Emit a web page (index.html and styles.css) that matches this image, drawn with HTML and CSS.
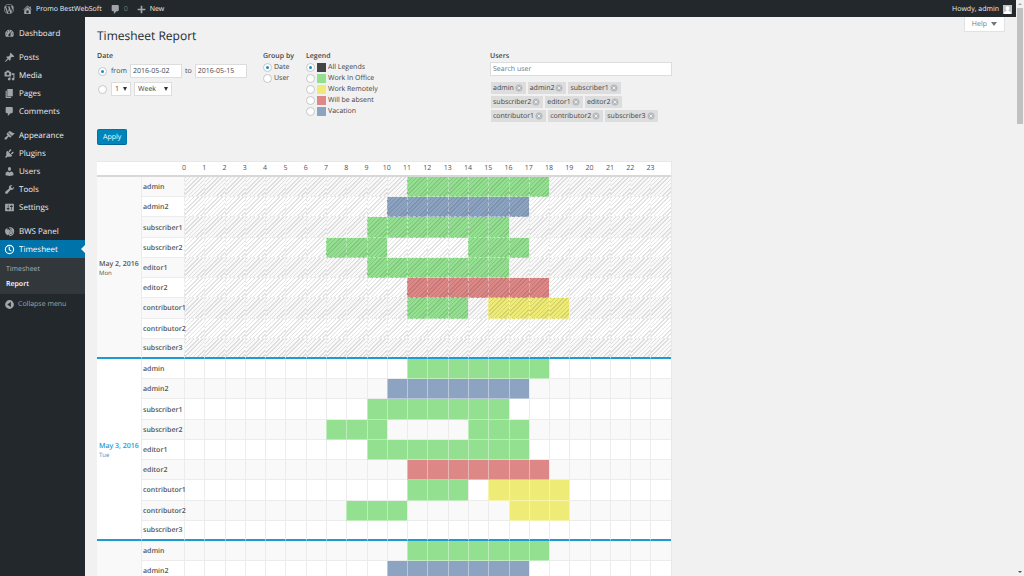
FILE: index.html
```html
<!DOCTYPE html>
<html lang="en">
<head>
<meta charset="utf-8">
<title>Timesheet Report</title>
<link rel="stylesheet" href="styles.css">
</head>
<body>
<div class="window">
<div class="screen">
  <header class="topbar">
    <a href="#" class="topbar-link" aria-label="WordPress"><svg class="icon icon-logo" viewBox="0 0 20 20"><path d="M20 10c0-5.51-4.49-10-10-10C4.48 0 0 4.49 0 10c0 5.52 4.48 10 10 10 5.51 0 10-4.48 10-10zM7.78 15.37L4.37 6.22c.55-.02 1.17-.08 1.17-.08.5-.06.44-1.13-.06-1.11 0 0-1.45.11-2.37.11-.18 0-.37 0-.58-.01C4.12 2.69 6.87 1.11 10 1.11c2.33 0 4.45.87 6.05 2.34-.68-.11-1.65.39-1.65 1.58 0 .74.45 1.36.9 2.1.35.61.55 1.36.55 2.46 0 1.49-1.4 5-1.4 5l-3.03-8.37c.54-.02.82-.17.82-.17.5-.05.44-1.25-.06-1.22 0 0-1.44.12-2.38.12-.87 0-2.33-.12-2.33-.12-.5-.03-.56 1.2-.06 1.22l.92.08 1.26 3.41zM17.41 10c.24-.64.74-1.87.43-4.25.7 1.29 1.05 2.71 1.05 4.25 0 3.29-1.73 6.24-4.4 7.78.97-2.59 1.94-5.2 2.92-7.78zM6.1 18.09C3.12 16.65 1.11 13.53 1.11 10c0-1.3.23-2.48.72-3.59C3.25 10.3 4.67 14.2 6.1 18.09zm4.03-6.63l2.58 6.98c-.86.29-1.76.45-2.71.45-.79 0-1.57-.11-2.29-.33.81-2.38 1.62-4.74 2.42-7.1z"/></svg></a>
    <a href="#" class="topbar-link"><svg class="icon" viewBox="0 0 20 20"><path d="M16 8.5l1.53 1.53-1.06 1.06L10 4.6l-6.47 6.49-1.06-1.06L10 2.5l4 4v-2h2v4zm-6-2.46l6 5.99V18H4v-5.97zM12 17v-5H8v5h4z"/></svg>Promo BestWebSoft</a>
    <a href="#" class="topbar-link topbar-muted"><svg class="icon" viewBox="0 0 20 20"><path d="M5 2h9c1.1 0 2 .9 2 2v7c0 1.1-.9 2-2 2h-2l-5 5v-5H5c-1.1 0-2-.9-2-2V4c0-1.1.9-2 2-2z"/></svg>0</a>
    <a href="#" class="topbar-link"><svg class="icon" viewBox="0 0 20 20"><path d="M8.500 3h3v5.500H17v3h-5.500V17h-3v-5.500H3v-3h5.500z"/></svg>New</a>
    <a href="#" class="topbar-link topbar-user">Howdy, admin<svg class="avatar" viewBox="0 0 18 18"><rect width="18" height="18" fill="#c4c4c4"/><path fill="#fff" d="M9 2.500c2.600 0 3.800 1.800 3.600 4.200-.1 1.600-.8 2.800-1.600 3.600v1.500l4.500 2.200V18h-13v-4l4.500-2.200v-1.500c-.8-.8-1.500-2-1.600-3.600C5.200 4.300 6.400 2.500 9 2.500z"/></svg></a>
  </header>

  <div class="body">
    <nav class="sidebar">
      <ul class="menu">
        <li><a href="#" class="menu-link"><svg class="icon" viewBox="0 0 20 20"><path fill-rule="evenodd" d="M3.76 16h12.480c1.100-1.370 1.760-3.110 1.760-5 0-4.420-3.580-8-8-8s-8 3.580-8 8c0 1.890.66 3.630 1.760 5zM10 4c.55 0 1 .45 1 1s-.45 1-1 1-1-.45-1-1 .45-1 1-1zM6 6c.55 0 1 .45 1 1s-.45 1-1 1-1-.45-1-1 .45-1 1-1zm8 0c.55 0 1 .45 1 1s-.45 1-1 1-1-.45-1-1 .45-1 1-1zm-5.370 5.550L12 7v6c0 1.100-.9 2-2 2s-2-.9-2-2c0-.57.24-1.080.63-1.450zM4 10c.55 0 1 .45 1 1s-.45 1-1 1-1-.45-1-1 .45-1 1-1zm12 0c.55 0 1 .45 1 1s-.45 1-1 1-1-.45-1-1 .45-1 1-1z"/></svg>Dashboard</a></li>
      </ul>
      <ul class="menu">
        <li><a href="#" class="menu-link"><svg class="icon" viewBox="0 0 20 20"><path d="M10.44 3.020l1.820-1.820 6.360 6.350-1.830 1.820c-1.050-.68-2.480-.57-3.410.36l-.75.75c-.92.93-1.040 2.350-.35 3.410l-1.830 1.820-2.410-2.410-2.800 2.790c-.42.42-3.380 2.710-3.800 2.290s1.860-3.390 2.280-3.810l2.790-2.790L4.100 9.360l1.830-1.820c1.050.69 2.480.57 3.400-.36l.75-.75c.93-.92 1.050-2.350.36-3.410z"/></svg>Posts</a></li>
        <li><a href="#" class="menu-link"><svg class="icon" viewBox="0 0 20 20"><path fill-rule="evenodd" d="M13 11V4c0-.55-.45-1-1-1h-1.670L9 1H5L3.670 3H2c-.55 0-1 .45-1 1v7c0 .55.45 1 1 1h10c.55 0 1-.45 1-1zM7 4.500c1.380 0 2.500 1.120 2.500 2.500S8.380 9.500 7 9.500 4.500 8.380 4.500 7 5.620 4.500 7 4.500zM14 6h5v10.500c0 1.380-1.120 2.500-2.500 2.500S14 17.880 14 16.500s1.120-2.500 2.500-2.500c.17 0 .34.02.5.05V9h-3V6zm-4 8.050V13h2v3.500c0 1.380-1.120 2.500-2.500 2.500S7 17.880 7 16.500 8.120 14 9.500 14c.17 0 .34.02.5.05z"/></svg>Media</a></li>
        <li><a href="#" class="menu-link"><svg class="icon" viewBox="0 0 20 20"><path d="M6 15V2h10v13H6zm-1 1h8v2H3V5h2v11z"/></svg>Pages</a></li>
        <li><a href="#" class="menu-link"><svg class="icon" viewBox="0 0 20 20"><path d="M5 2h9c1.100 0 2 .9 2 2v7c0 1.100-.9 2-2 2h-2l-5 5v-5H5c-1.100 0-2-.9-2-2V4c0-1.100.9-2 2-2z"/></svg>Comments</a></li>
      </ul>
      <ul class="menu">
        <li><a href="#" class="menu-link"><svg class="icon" viewBox="0 0 20 20"><path d="M14.480 11.060L7.410 3.990l1.500-1.500c.5-.56 2.300-.47 3.510.32 1.210.8 1.430 1.280 2.910 2.100 1.180.64 2.450 1.260 4.450.85zm-.71.71L6.700 4.700 4.930 6.470c-.39.39-.39 1.020 0 1.410l1.060 1.060c.39.39.39 1.030 0 1.420-.6.6-1.430 1.110-2.210 1.690-.35.26-.7.53-1.010.84C1.430 14.230.4 16.080 1.400 17.070c.99 1 2.840-.03 4.180-1.360.31-.31.58-.66.85-1.020.57-.78 1.080-1.610 1.690-2.210.39-.39 1.020-.39 1.410 0l1.060 1.060c.39.39 1.020.39 1.410 0z"/></svg>Appearance</a></li>
        <li><a href="#" class="menu-link"><svg class="icon" viewBox="0 0 20 20"><path d="M13.110 4.360L9.870 7.600 8 5.730l3.240-3.240c.35-.34 1.050-.2 1.560.32.52.51.66 1.210.31 1.550zm-8 1.770l.91-1.120 9.010 9.010-1.190.84c-.71.71-2.630 1.160-3.820 1.160H6.140L4.900 17.260c-.59.59-1.540.59-2.120 0-.59-.58-.59-1.530 0-2.120l1.240-1.240v-3.880c0-1.130.4-3.190 1.090-3.890zm7.260 3.970l3.240-3.240c.34-.35 1.040-.21 1.550.31.52.51.66 1.210.31 1.550l-3.240 3.250z"/></svg>Plugins</a></li>
        <li><a href="#" class="menu-link"><svg class="icon" viewBox="0 0 20 20"><path d="M10 9.250c-2.270 0-2.730-3.440-2.730-3.440C7 4.020 7.820 2 9.970 2c2.160 0 2.980 2.020 2.710 3.810 0 0-.41 3.440-2.680 3.440zm0 2.570L12.720 10c2.390 0 4.520 2.330 4.520 4.530v2.490s-3.650 1.130-7.240 1.130c-3.650 0-7.240-1.130-7.240-1.130v-2.490c0-2.250 1.940-4.480 4.470-4.480z"/></svg>Users</a></li>
        <li><a href="#" class="menu-link"><svg class="icon" viewBox="0 0 20 20"><path d="M16.680 9.770c-1.340 1.340-3.300 1.670-4.950.99l-5.410 6.520c-.99.99-2.590.99-3.580 0s-.99-2.590 0-3.570l6.520-5.420c-.68-1.650-.35-3.610.99-4.950 1.280-1.280 3.120-1.620 4.720-1.060l-2.890 2.890 2.820 2.820 2.860-2.870c.53 1.580.18 3.390-1.080 4.650z"/></svg>Tools</a></li>
        <li><a href="#" class="menu-link"><svg class="icon" viewBox="0 0 20 20"><path fill-rule="evenodd" d="M18 16V4c0-.55-.45-1-1-1H3c-.55 0-1 .45-1 1v12c0 .55.45 1 1 1h14c.55 0 1-.45 1-1zM8 11h1c.55 0 1 .45 1 1s-.45 1-1 1H8v1.500c0 .28-.22.5-.5.5s-.5-.22-.5-.5V13H6c-.55 0-1-.45-1-1s.45-1 1-1h1V5.500c0-.28.22-.5.5-.5s.5.22.5.5V11zm5-2h-1c-.55 0-1-.45-1-1s.45-1 1-1h1V5.500c0-.28.22-.5.5-.5s.5.22.5.5V7h1c.55 0 1 .45 1 1s-.45 1-1 1h-1v5.500c0 .28-.22.5-.5.5s-.5-.22-.5-.5V9z"/></svg>Settings</a></li>
      </ul>
      <ul class="menu">
        <li><a href="#" class="menu-link"><svg class="icon" viewBox="0 0 20 20"><path d="M2 7c1-2 3-3 5-3l-2 3 3-1 3 2-1 6-3 3c-3-1-5-4-5-7z"/><path fill="none" stroke="currentColor" stroke-width="2" d="M9 3.500c5-1.500 9 2 8.500 7-.4 4-3.500 7-7.500 7M12 5c1 4 1 8-3 11M15 5c.5 4 0 8-3 10"/></svg>BWS Panel</a></li>
        <li>
          <a href="#" class="menu-link menu-link-current"><svg class="icon" viewBox="0 0 20 20"><circle cx="10" cy="10" r="7.500" fill="none" stroke="currentColor" stroke-width="2"/><path fill="none" stroke="currentColor" stroke-width="2" d="M9.500 5v5.500l4 2.500"/></svg>Timesheet</a>
          <ul class="submenu">
            <li><a href="#" class="submenu-link">Timesheet</a></li>
            <li><a href="#" class="submenu-link submenu-link-current">Report</a></li>
          </ul>
        </li>
      </ul>
      <button type="button" class="collapse"><svg class="icon" viewBox="0 0 20 20"><path fill-rule="evenodd" d="M10 2a8 8 0 1 0 0 16 8 8 0 0 0 0-16zM12.500 5.500v9L6 10z"/></svg>Collapse menu</button>
    </nav>

    <main class="content">
      <div class="page-head">
        <h1 class="page-title">Timesheet Report</h1>
        <button type="button" class="help">Help<span class="caret"></span></button>
      </div>

      <form class="report">
        <div class="filters">
          <fieldset class="filter filter-date">
            <legend class="filter-title">Date</legend>
            <div class="date-row">
              <input type="radio" class="radio" name="range" id="range-dates" checked>
              <label for="range-dates">from</label>
              <input type="text" class="text-input date-input" aria-label="From date" value="2016-05-02">
              <label for="date-to">to</label>
              <input type="text" class="text-input date-input" id="date-to" value="2016-05-15">
            </div>
            <div class="date-row">
              <input type="radio" class="radio" name="range" aria-label="Period">
              <span class="select select-count"><select aria-label="Count"><option>1</option><option>2</option></select></span>
              <span class="select select-unit"><select aria-label="Unit"><option>Week</option><option>Month</option></select></span>
            </div>
          </fieldset>
          <fieldset class="filter filter-group">
            <legend class="filter-title">Group by</legend>
            <label class="option"><input type="radio" class="radio" name="group" checked>Date</label>
            <label class="option"><input type="radio" class="radio" name="group">User</label>
          </fieldset>
          <fieldset class="filter filter-legend">
            <legend class="filter-title">Legend</legend>
            <label class="option"><input type="radio" class="radio" name="legend" checked><span class="swatch swatch-all"></span>All Legends</label>
            <label class="option"><input type="radio" class="radio" name="legend"><span class="swatch swatch-office"></span>Work In Office</label>
            <label class="option"><input type="radio" class="radio" name="legend"><span class="swatch swatch-remote"></span>Work Remotely</label>
            <label class="option"><input type="radio" class="radio" name="legend"><span class="swatch swatch-absent"></span>Will be absent</label>
            <label class="option"><input type="radio" class="radio" name="legend"><span class="swatch swatch-vacation"></span>Vacation</label>
          </fieldset>
          <div class="filter filter-users">
            <label class="filter-title" for="user-search">Users</label>
            <input type="text" class="text-input" id="user-search" placeholder="Search user">
            <ul class="chips" id="chips"></ul>
          </div>
        </div>
        <button type="button" class="apply">Apply</button>

        <table class="sheet" id="sheet">
          <colgroup>
            <col class="col-date"><col class="col-user"><col span="24">
          </colgroup>
        </table>
      </form>
    </main>
  </div>
</div>
<div class="scrollbar" aria-hidden="true">
  <span class="scroll-arrow scroll-up"></span>
  <span class="scroll-thumb"></span>
  <span class="scroll-arrow scroll-down"></span>
</div>
</div>
<script src="script.js"></script>
</body>
</html>
```
FILE: styles.css
```css
* {
  box-sizing: border-box;
}

body {
  margin: 0;
  background: #f1f1f1;
  color: #444;
  font-family: "Open Sans", "Noto Sans", sans-serif;
  font-size: 7px;
  line-height: 11px;
  text-rendering: geometricPrecision;
}

ul {
  margin: 0;
  padding: 0;
  list-style: none;
}

a {
  color: inherit;
  text-decoration: none;
}

button,
input,
select {
  margin: 0;
  font: inherit;
  color: inherit;
  text-rendering: inherit;
}

.window {
  display: flex;
  height: 100vh;
  overflow: hidden;
}

.screen {
  display: flex;
  flex: 1;
  flex-direction: column;
  min-width: 0;
}

.body {
  display: flex;
  flex: 1;
  min-height: 0;
}

.icon {
  flex: none;
  width: 11px;
  height: 11px;
  fill: currentColor;
  color: #a0a5aa;
}

/* Top bar */

.topbar {
  display: flex;
  flex: none;
  align-items: center;
  gap: 8px;
  height: 17px;
  padding: 1px 4px 0;
  background: #23282d;
  color: #eee;
}

.topbar-link {
  display: flex;
  align-items: center;
  gap: 3px;
}

.icon-logo {
  width: 10px;
  height: 10px;
}

.topbar-muted {
  color: #72777c;
}

.topbar-user {
  gap: 4px;
  margin-left: auto;
}

.avatar {
  width: 9px;
  height: 9px;
}

/* Sidebar */

.sidebar {
  flex: none;
  width: 85px;
  padding-top: 7px;
  background: #23282d;
  color: #eee;
  font-size: 8px;
}

.menu + .menu {
  margin-top: 6px;
}

.menu-link {
  display: flex;
  align-items: center;
  gap: 4px;
  height: 18px;
  padding-left: 4px;
}

.menu-link-current {
  position: relative;
  background: #0073aa;
  color: #fff;
}

.menu-link-current .icon {
  color: #fff;
}

.menu-link-current::after {
  content: "";
  position: absolute;
  top: 5px;
  right: 0;
  border: 4px solid transparent;
  border-left: 0;
  border-right-color: #f1f1f1;
}

.submenu {
  padding: 4px 0 2px;
  background: #32373c;
  font-size: 7px;
  line-height: 15px;
}

.submenu-link {
  display: block;
  padding-left: 6px;
  color: #a9adb1;
}

.submenu-link-current {
  color: #fff;
  font-weight: 600;
}

.collapse {
  display: flex;
  align-items: center;
  gap: 3px;
  height: 20px;
  padding: 0 0 0 4px;
  border: 0;
  background: none;
  color: #a0a5aa;
  font-size: 7px;
}

/* Page */

.content {
  flex: 1;
  min-width: 0;
  padding: 0 11px 0 12px;
  overflow: hidden;
}

.page-head {
  display: flex;
  align-items: flex-start;
  justify-content: space-between;
}

.page-title {
  margin: 0;
  padding: 10px 0 6px;
  color: #23282d;
  font-size: 12px;
  font-weight: 400;
  line-height: 18px;
}

.help {
  display: flex;
  align-items: center;
  gap: 4px;
  height: 15px;
  padding: 0 7px;
  border: 1px solid #e2e2e2;
  border-top: 0;
  background: #fff;
  color: #72777c;
}

.caret {
  border: 3px solid transparent;
  border-top: 4px solid #72777c;
  border-bottom: 0;
}

.report {
  max-width: 575px;
}

.filters {
  display: flex;
  align-items: flex-start;
}

.filter {
  min-width: 0;
  margin: 0;
  padding: 0;
  border: 0;
}

.filter-title {
  display: block;
  padding: 1px 0 0;
  font-weight: 600;
  line-height: 10px;
}

.filter-date {
  width: 166px;
}

.filter-group {
  width: 43px;
}

.filter-legend {
  width: 184px;
}

.filter-users {
  flex: 1;
}

.radio {
  display: grid;
  flex: none;
  place-items: center;
  width: 9px;
  height: 9px;
  border: 1px solid #c4c7ca;
  border-radius: 50%;
  background: #fff;
  appearance: none;
}

.radio:checked::before {
  content: "";
  width: 3px;
  height: 3px;
  border-radius: 50%;
  background: #1e8cbe;
}

.date-row {
  display: flex;
  align-items: center;
  gap: 3px;
  margin-top: 2px;
  padding-left: 1px;
}

.date-row + .date-row {
  margin-top: 4px;
}

.date-row .radio {
  margin-right: 1px;
}

.text-input {
  width: 100%;
  height: 14px;
  padding: 0 2px;
  border: 1px solid #ddd;
  background: #fff;
}

.text-input::placeholder {
  color: #777;
}

.date-input {
  width: 52px;
}

.select {
  display: grid;
  align-items: center;
  height: 14px;
  border: 1px solid #ddd;
  background: #fff;
}

.select select {
  grid-area: 1 / 1;
  width: 100%;
  padding: 0 3px;
  border: 0;
  background: none;
  appearance: none;
}

.select::after {
  content: "";
  grid-area: 1 / 1;
  justify-self: end;
  margin-right: 3px;
  border: 2px solid transparent;
  border-top: 4px solid #333;
  border-bottom: 0;
  pointer-events: none;
}

.select-count {
  width: 20px;
}

.select-unit {
  width: 38px;
}

.option {
  display: flex;
  align-items: center;
  gap: 2px;
  height: 11px;
}

.swatch {
  width: 9px;
  height: 9px;
}

.swatch-all {
  background: #444;
}

.swatch-office {
  background: #94e091;
}

.swatch-remote {
  background: #eeec76;
}

.swatch-absent {
  background: #dd8787;
}

.swatch-vacation {
  background: #8ca4c1;
}

.chips {
  display: flex;
  flex-wrap: wrap;
  gap: 2px;
  padding: 6px 8px 0 1px;
}

.chip {
  display: flex;
  align-items: center;
  gap: 1px;
  height: 12px;
  padding: 0 3px 0 2px;
  background: #ddd;
}

.chip-remove {
  display: flex;
  padding: 0;
  border: 0;
  background: none;
}

.chip-remove svg {
  width: 8px;
  height: 8px;
}

.apply {
  display: block;
  height: 16px;
  margin-top: 7px;
  padding: 0 5px;
  border: 1px solid #0073aa;
  border-bottom-color: #006799;
  border-radius: 2px;
  background: #0085ba;
  color: #fff;
}

/* Timesheet */

.sheet {
  width: 100%;
  margin-top: 16px;
  border: 1px solid #e8e8e8;
  border-width: 1px 1px 0 0;
  border-spacing: 0;
  background: #fff;
  color: #555;
  table-layout: fixed;
}

.sheet th,
.sheet td {
  height: 20px;
  padding: 0;
}

.col-date {
  width: 44px;
}

.col-user {
  width: 43px;
}

.sheet .hour {
  height: 15px;
  border-bottom: 2px solid #d8d8d8;
  font-weight: 400;
}

.hour span {
  display: block;
  width: 20px;
  margin-left: -10px;
  text-align: center;
}

.sheet .date {
  height: 182px;
  padding: 2px 0 0 2px;
  border-bottom: 2px solid #1e9bd1;
  font-weight: 600;
  line-height: 9px;
  text-align: left;
}

.weekday {
  display: block;
  font-size: 6px;
  font-weight: 400;
  line-height: 8px;
}

.sheet .user {
  padding: 2px 0 0 1px;
  border-bottom: 1px solid #ececec;
  border-left: 1px solid #ececec;
  font-weight: 600;
  text-align: left;
}

.slot {
  border-bottom: 1px solid #ececec;
  border-left: 1px solid #ececec;
}

.shade {
  background-color: #f9f9f9;
}

.sheet .today .date {
  color: #1e9bd1;
}

.past .slot {
  border-style: dashed;
  border-top: 0;
  border-right: 0;
  background-image: repeating-linear-gradient(135deg, rgba(0, 0, 0, 0.11) 0 1px, transparent 1px 3px);
}

.sheet .office,
.sheet .remote,
.sheet .absent,
.sheet .vacation {
  border-color: rgba(255, 255, 255, 0.4);
}

.office {
  background-color: #94e091;
}

.remote {
  background-color: #eeec76;
}

.absent {
  background-color: #dd8787;
}

.vacation {
  background-color: #8ca4c1;
}

.sheet tbody tr:last-child .user,
.sheet tbody tr:last-child .slot {
  border-bottom: 2px solid #1e9bd1;
}

/* Scroll bar */

.scrollbar {
  display: flex;
  flex: none;
  flex-direction: column;
  align-items: center;
  width: 8px;
  padding: 3px 0;
  background: #f1f1f1;
}

.scroll-arrow {
  border: 2px solid transparent;
}

.scroll-up {
  border-top: 0;
  border-bottom: 2px solid #a3a3a3;
}

.scroll-down {
  margin-top: auto;
  border-top: 2px solid #505050;
  border-bottom: 0;
}

.scroll-thumb {
  width: 6px;
  height: 116px;
  margin-top: 3px;
  background: #c1c1c1;
}
```
FILE: script.js
```js
const users = [
  "admin", "admin2", "subscriber1",
  "subscriber2", "editor1", "editor2",
  "contributor1", "contributor2", "subscriber3"
];

// Each entry is [first hour, end hour, legend].
const usual = {
  admin: [[11, 18, "office"]],
  admin2: [[10, 17, "vacation"]],
  subscriber1: [[9, 16, "office"]],
  subscriber2: [[7, 10, "office"], [14, 17, "office"]],
  editor1: [[9, 17, "office"]],
  editor2: [[11, 18, "absent"]],
  contributor1: [[11, 14, "office"], [15, 19, "remote"]],
  contributor2: [[8, 11, "office"], [16, 19, "remote"]]
};

const days = [
  { date: "May 2, 2016", weekday: "Mon", state: "past", plan: { ...usual, editor1: [[9, 16, "office"]], contributor2: [] } },
  { date: "May 3, 2016", weekday: "Tue", state: "today", plan: usual },
  { date: "May 4, 2016", weekday: "Wed", state: "", plan: usual }
];

const removeIcon = '<svg viewBox="0 0 16 16"><circle cx="8" cy="8" r="7" fill="#b4b9be"/><path d="M5 5l6 6M11 5l-6 6" stroke="#eee" stroke-width="2"/></svg>';

document.getElementById("chips").innerHTML = users
  .map(user => `<li class="chip">${user}<button type="button" class="chip-remove" aria-label="Remove ${user}">${removeIcon}</button></li>`)
  .join("");

const hours = Array.from({ length: 24 }, (_, hour) => hour);

let html = '<thead><tr><td class="hour" colspan="2"></td>' +
  hours.map(hour => `<th class="hour" scope="col"><span>${hour}</span></th>`).join("") +
  "</tr></thead>";

let row = 0;
for (const day of days) {
  html += `<tbody class="${day.state}">`;
  users.forEach((user, index) => {
    const shade = row % 2 === 0 ? " shade" : "";
    html += "<tr>";
    if (index === 0) {
      html += `<th class="date${shade}" scope="rowgroup" rowspan="${users.length}">${day.date}<span class="weekday">${day.weekday}</span></th>`;
    }
    html += `<th class="user${shade}" scope="row">${user}</th>`;
    for (const hour of hours) {
      const entry = (day.plan[user] || []).find(([start, end]) => hour >= start && hour < end);
      html += `<td class="slot${entry ? " " + entry[2] : shade}"></td>`;
    }
    html += "</tr>";
    row += 1;
  });
  html += "</tbody>";
}

document.getElementById("sheet").insertAdjacentHTML("beforeend", html);
```
